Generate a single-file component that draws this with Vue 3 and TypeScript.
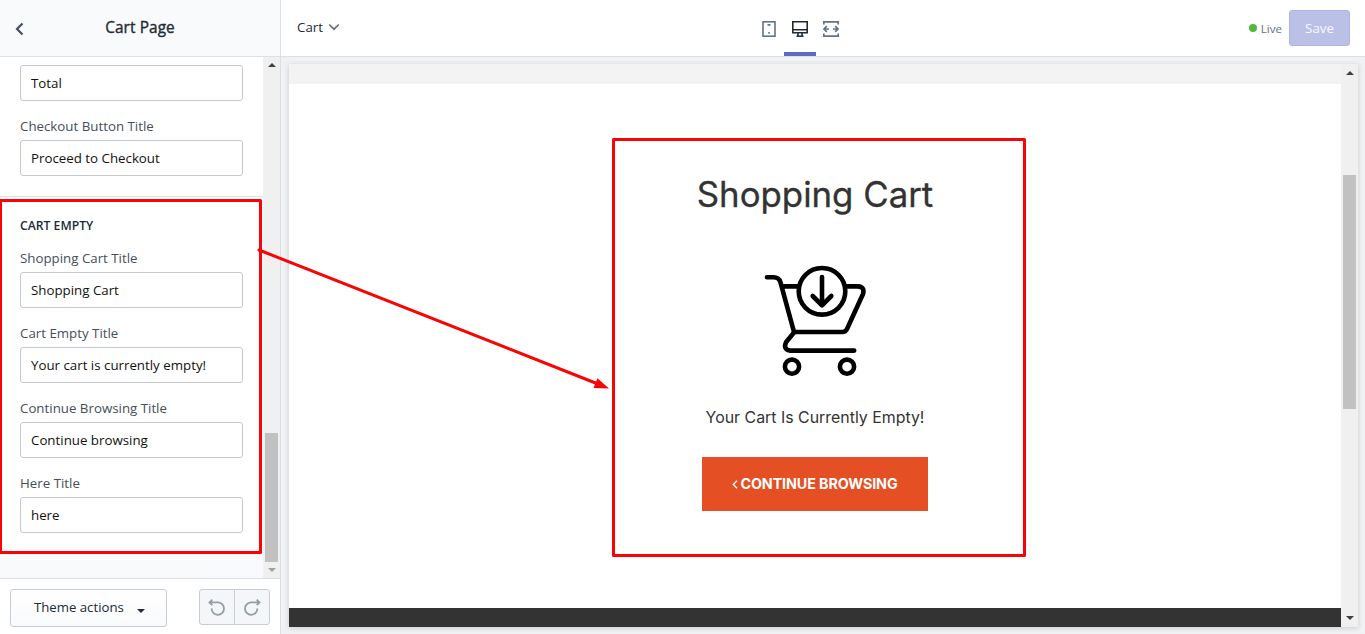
<script setup lang="ts">
interface Field {
  label: string
  value: string
}

const upperFields: Field[] = [
  { label: '', value: 'Total' },
  { label: 'Checkout Button Title', value: 'Proceed to Checkout' },
]

const emptyFields: Field[] = [
  { label: 'Shopping Cart Title', value: 'Shopping Cart' },
  { label: 'Cart Empty Title', value: 'Your cart is currently empty!' },
  { label: 'Continue Browsing Title', value: 'Continue browsing' },
  { label: 'Here Title', value: 'here' },
]
</script>

<template>
  <div class="editor">
    <aside class="sidebar">
      <header class="side-head">
        <svg class="back" width="10" height="14" viewBox="0 0 10 14"><path d="M7.5 1.5 2 7l5.5 5.5" fill="none" stroke="#454f5b" stroke-width="2.2" /></svg>
        <h1>Cart Page</h1>
      </header>
      <div class="side-body">
        <div class="settings">
          <section class="group group-top">
            <div v-for="f in upperFields" :key="f.value" class="field">
              <label v-if="f.label">{{ f.label }}</label>
              <div class="input">{{ f.value }}</div>
            </div>
          </section>
          <section class="group group-empty">
            <h2>CART EMPTY</h2>
            <div v-for="f in emptyFields" :key="f.value" class="field">
              <label>{{ f.label }}</label>
              <div class="input">{{ f.value }}</div>
            </div>
          </section>
        </div>
        <div class="scrollbar side-scroll">
          <svg width="8" height="4" viewBox="0 0 8 4"><path d="M0 4 4 0l4 4z" fill="#404040" /></svg>
          <i class="thumb"></i>
          <svg width="8" height="4" viewBox="0 0 8 4"><path d="M0 0h8L4 4z" fill="#a0a0a0" /></svg>
        </div>
      </div>
      <footer class="side-foot">
        <button class="theme" type="button">
          <span>Theme actions</span>
          <svg width="8" height="4" viewBox="0 0 8 4"><path d="M0 0h8L4 4z" fill="#212b36" /></svg>
        </button>
        <div class="history">
          <button type="button">
            <svg width="18" height="18" viewBox="0 0 18 18" fill="none" stroke="#919eab" stroke-width="1.8"><path d="M1.500 4.400h8.700a6.200 6.200 0 1 1-6.600 6.200M4.300 1.600 1.500 4.400l2.800 2.800" /></svg>
          </button>
          <button type="button">
            <svg width="18" height="18" viewBox="0 0 18 18" fill="none" stroke="#919eab" stroke-width="1.8"><path d="M16.500 4.400H7.800a6.200 6.200 0 1 0 6.600 6.200M13.700 1.600l2.800 2.800-2.800 2.800" /></svg>
          </button>
        </div>
      </footer>
    </aside>

    <main class="main">
      <header class="topbar">
        <div class="page-pick">
          <span>Cart</span>
          <svg width="12" height="8" viewBox="0 0 12 8"><path d="M1.200 1.500 6 6.200l4.800-4.700" fill="none" stroke="#637381" stroke-width="1.7" /></svg>
        </div>
        <nav class="devices">
          <span class="device">
            <svg width="16" height="18" viewBox="0 0 16 18"><rect x="2" y="1.8" width="12" height="14.4" fill="none" stroke="#637381" stroke-width="1.6" /><path d="M6.5 4.9h3M7.2 12.8h1.6" stroke="#637381" stroke-width="1.7" /></svg>
          </span>
          <span class="device active">
            <svg width="16" height="18" viewBox="0 0 16 18" fill="none" stroke="#212b36" stroke-width="1.6"><path d="M.8 1.8h14.4v11H.8zM.8 9.7h14.4M6 12.8v3.1M10 12.8v3.1M4.5 16.2h7" /></svg>
          </span>
          <span class="device">
            <svg width="18" height="18" viewBox="0 0 18 18" fill="none" stroke="#637381" stroke-width="1.7"><path d="M1.800 4.500V1.900h14.400v2.600M1.800 13.500v2.600h14.400v-2.600M2 9h5M11 9h5M4.800 6.200 2 9l2.800 2.800M13.200 6.200 16 9l-2.800 2.800" /></svg>
          </span>
        </nav>
        <div class="publish">
          <i class="dot"></i>
          <span class="live">Live</span>
          <button class="save" type="button">Save</button>
        </div>
      </header>

      <div class="preview">
        <div class="shop">
          <div class="shop-head"></div>
          <div class="cart">
            <h2>Shopping Cart</h2>
            <svg class="cart-icon" width="104" height="114" viewBox="763 264 104 114" fill="none" stroke="#000" stroke-width="4.6" stroke-linecap="round" stroke-linejoin="round">
              <path d="M767 277.3h6.500q5.500 0 7 5L794 332h48.500q3 0 4.500-3L863 294q2-7-5-7.600h-11M782 286.400h16" />
              <path d="M794 332.500 786.200 342q-3.500 7 3.500 8.600h64.500" />
              <circle cx="822" cy="291.300" r="23.300" />
              <path d="M822 277v28M812.700 296l9.300 9.300 9.300-9.300" />
              <circle cx="792" cy="366.700" r="7.100" />
              <circle cx="847" cy="366.700" r="7.100" />
            </svg>
            <p>Your Cart Is Currently Empty!</p>
            <button class="continue" type="button">
              <svg width="6" height="9" viewBox="0 0 6 9"><path d="M5 .8 1.300 4.500 5 8.200" fill="none" stroke="#fff" stroke-width="1.300" /></svg>
              <span>CONTINUE BROWSING</span>
            </button>
          </div>
          <div class="shop-foot"></div>
        </div>
        <div class="scrollbar shop-scroll">
          <svg width="8" height="4" viewBox="0 0 8 4"><path d="M0 4 4 0l4 4z" fill="#404040" /></svg>
          <i class="thumb"></i>
          <svg width="8" height="4" viewBox="0 0 8 4"><path d="M0 0h8L4 4z" fill="#404040" /></svg>
        </div>
      </div>
    </main>

    <svg class="marks" width="1365" height="634" viewBox="0 0 1365 634">
      <g fill="none" stroke="#f90404" stroke-width="3" stroke-linejoin="round">
        <rect x="0.500" y="200.500" width="260" height="352" />
        <rect x="613.500" y="139.500" width="411" height="416" />
        <path d="M259 250 598 384" stroke-linecap="round" />
      </g>
      <path d="M609 388.500 593.500 388 597.500 378.300z" fill="#f90404" />
    </svg>
  </div>
</template>

<style>
body {
  margin: 0;
  overflow: hidden;
}
</style>

<style scoped>
* {
  box-sizing: border-box;
}
h1, h2, p {
  margin: 0;
}
button {
  font: inherit;
  padding: 0;
}
svg {
  display: block;
  flex: none;
}
.editor {
  position: relative;
  display: flex;
  width: 1365px;
  height: 634px;
  background: #eff1f3;
  font-family: "Open Sans", "Noto Sans", sans-serif;
  font-size: 13.300px;
  color: #212b36;
}
.sidebar {
  width: 281px;
  flex: none;
  display: flex;
  flex-direction: column;
  border-right: 1px solid #dcdfe3;
}
.side-head {
  height: 57px;
  flex: none;
  display: flex;
  align-items: center;
  padding-left: 15px;
  background: #f9fafb;
  border-bottom: 1px solid #dfe2e5;
}
.back {
  margin-top: 2px;
}
h1 {
  flex: 1;
  padding-right: 25px;
  text-align: center;
  font-size: 15.400px;
  font-weight: 400;
  letter-spacing: 0.100px;
  line-height: 20px;
  -webkit-text-stroke: 0.350px currentColor;
}
.side-body {
  flex: 1;
  display: flex;
  min-height: 0;
}
.settings {
  width: 263px;
  background: #f9fafb;
}
.group {
  padding: 0 20px;
  background: #fff;
}
.group-top {
  height: 140px;
  padding-top: 8px;
  border-bottom: 1px solid #dfe3e8;
}
.group-empty {
  height: 355px;
  padding-top: 19px;
}
.group-empty h2 {
  height: 32px;
  font-size: 12.200px;
  line-height: 20px;
  font-weight: 600;
}
.field + .field {
  margin-top: 15px;
}
.field label {
  display: block;
  height: 24px;
  line-height: 20px;
  color: #454f5b;
}
.input {
  width: 223px;
  height: 36px;
  padding-left: 10px;
  border: 1px solid #c4c9ce;
  border-radius: 3px;
  line-height: 34px;
  color: #111;
  background: #fff;
}
.scrollbar {
  width: 17px;
  display: flex;
  flex-direction: column;
  align-items: center;
  background: #f0f0f0;
}
.thumb {
  width: 13px;
  background: #c1c1c1;
}
.side-scroll {
  padding: 6px 0;
}
.side-scroll .thumb {
  height: 129px;
  margin: auto 0 6px;
}
.side-foot {
  height: 56px;
  flex: none;
  display: flex;
  justify-content: space-between;
  padding: 10px 10px 0;
  background: #fff;
  border-top: 1px solid #dcdfe3;
}
.theme {
  width: 157px;
  height: 38px;
  display: flex;
  align-items: center;
  gap: 13px;
  padding-left: 23px;
  border: 1px solid #c4cdd5;
  border-radius: 3px;
  background: linear-gradient(#fff, #f9fafb);
  color: #212b36;
  font-size: 13.200px;
}
.theme span {
  margin-top: -2px;
}
.theme svg {
  margin-top: 5px;
}
.history {
  display: flex;
  width: 71px;
  height: 36px;
  border: 1px solid #c4cdd5;
  border-radius: 3px;
  background: #f4f6f8;
}
.history button {
  flex: 1;
  display: flex;
  align-items: center;
  justify-content: center;
  border: 0;
  background: none;
}
.history button + button {
  border-left: 1px solid #c4cdd5;
}
.main {
  flex: 1;
  display: flex;
  flex-direction: column;
}
.topbar {
  height: 57px;
  flex: none;
  display: grid;
  grid-template-columns: 472px 94px 1fr;
  background: #fff;
  border-bottom: 1px solid #dcdfe3;
}
.page-pick {
  display: flex;
  align-items: center;
  gap: 5px;
  height: 54px;
  padding-left: 16px;
}
.devices {
  display: flex;
}
.device {
  width: 31px;
  height: 56px;
  display: flex;
  align-items: center;
  justify-content: center;
  padding-top: 2px;
}
.device:last-child {
  width: 30px;
}
.device.active {
  width: 32px;
  padding-top: 6px;
  border-bottom: 4px solid #5c6ac4;
}
.publish {
  display: flex;
  align-items: center;
  justify-content: flex-end;
  padding-right: 15px;
}
.dot {
  width: 8px;
  height: 8px;
  border-radius: 50%;
  background: #50b83c;
}
.live {
  margin: 1px 7px 0 4px;
  font-size: 11.600px;
  color: #637381;
}
.save {
  width: 61px;
  height: 36px;
  border: 1px solid #aeb5e2;
  border-radius: 3px;
  background: #bac0e6;
  color: #f9faff;
}
.preview {
  flex: 1;
  display: flex;
  margin: 7px 7px 7px 8px;
  box-shadow: 0 1px 5px rgba(33, 43, 54, 0.18);
}
.shop {
  flex: 1;
  display: flex;
  flex-direction: column;
  background: #fff;
}
.shop-head {
  height: 20px;
  background: #f3f3f3;
}
.cart {
  flex: 1;
  display: flex;
  flex-direction: column;
  align-items: center;
  padding-top: 86px;
  font-family: Inter, "Liberation Sans", sans-serif;
  color: #333;
}
.cart h2 {
  font-size: 34.800px;
  font-weight: 400;
  line-height: 48px;
  -webkit-text-stroke: 0.300px currentColor;
}
.cart-icon {
  margin-top: 46px;
}
.cart p {
  margin-top: 28px;
  font-size: 15.900px;
  line-height: 24px;
}
.continue {
  width: 226px;
  height: 54px;
  margin-top: 27px;
  padding-bottom: 2px;
  display: flex;
  align-items: center;
  justify-content: center;
  gap: 2px;
  border: 0;
  background: #e45023;
  color: #fff;
  font-size: 14.300px;
  font-weight: 650;
  letter-spacing: -0.100px;
}
.continue svg {
  margin-top: 2px;
}
.shop-foot {
  height: 19px;
  background: #333;
}
.shop-scroll {
  padding: 7px 0;
}
.shop-scroll .thumb {
  height: 234px;
  margin: 100px 0 auto;
}
.marks {
  position: absolute;
  left: 0;
  top: 0;
}
</style>
